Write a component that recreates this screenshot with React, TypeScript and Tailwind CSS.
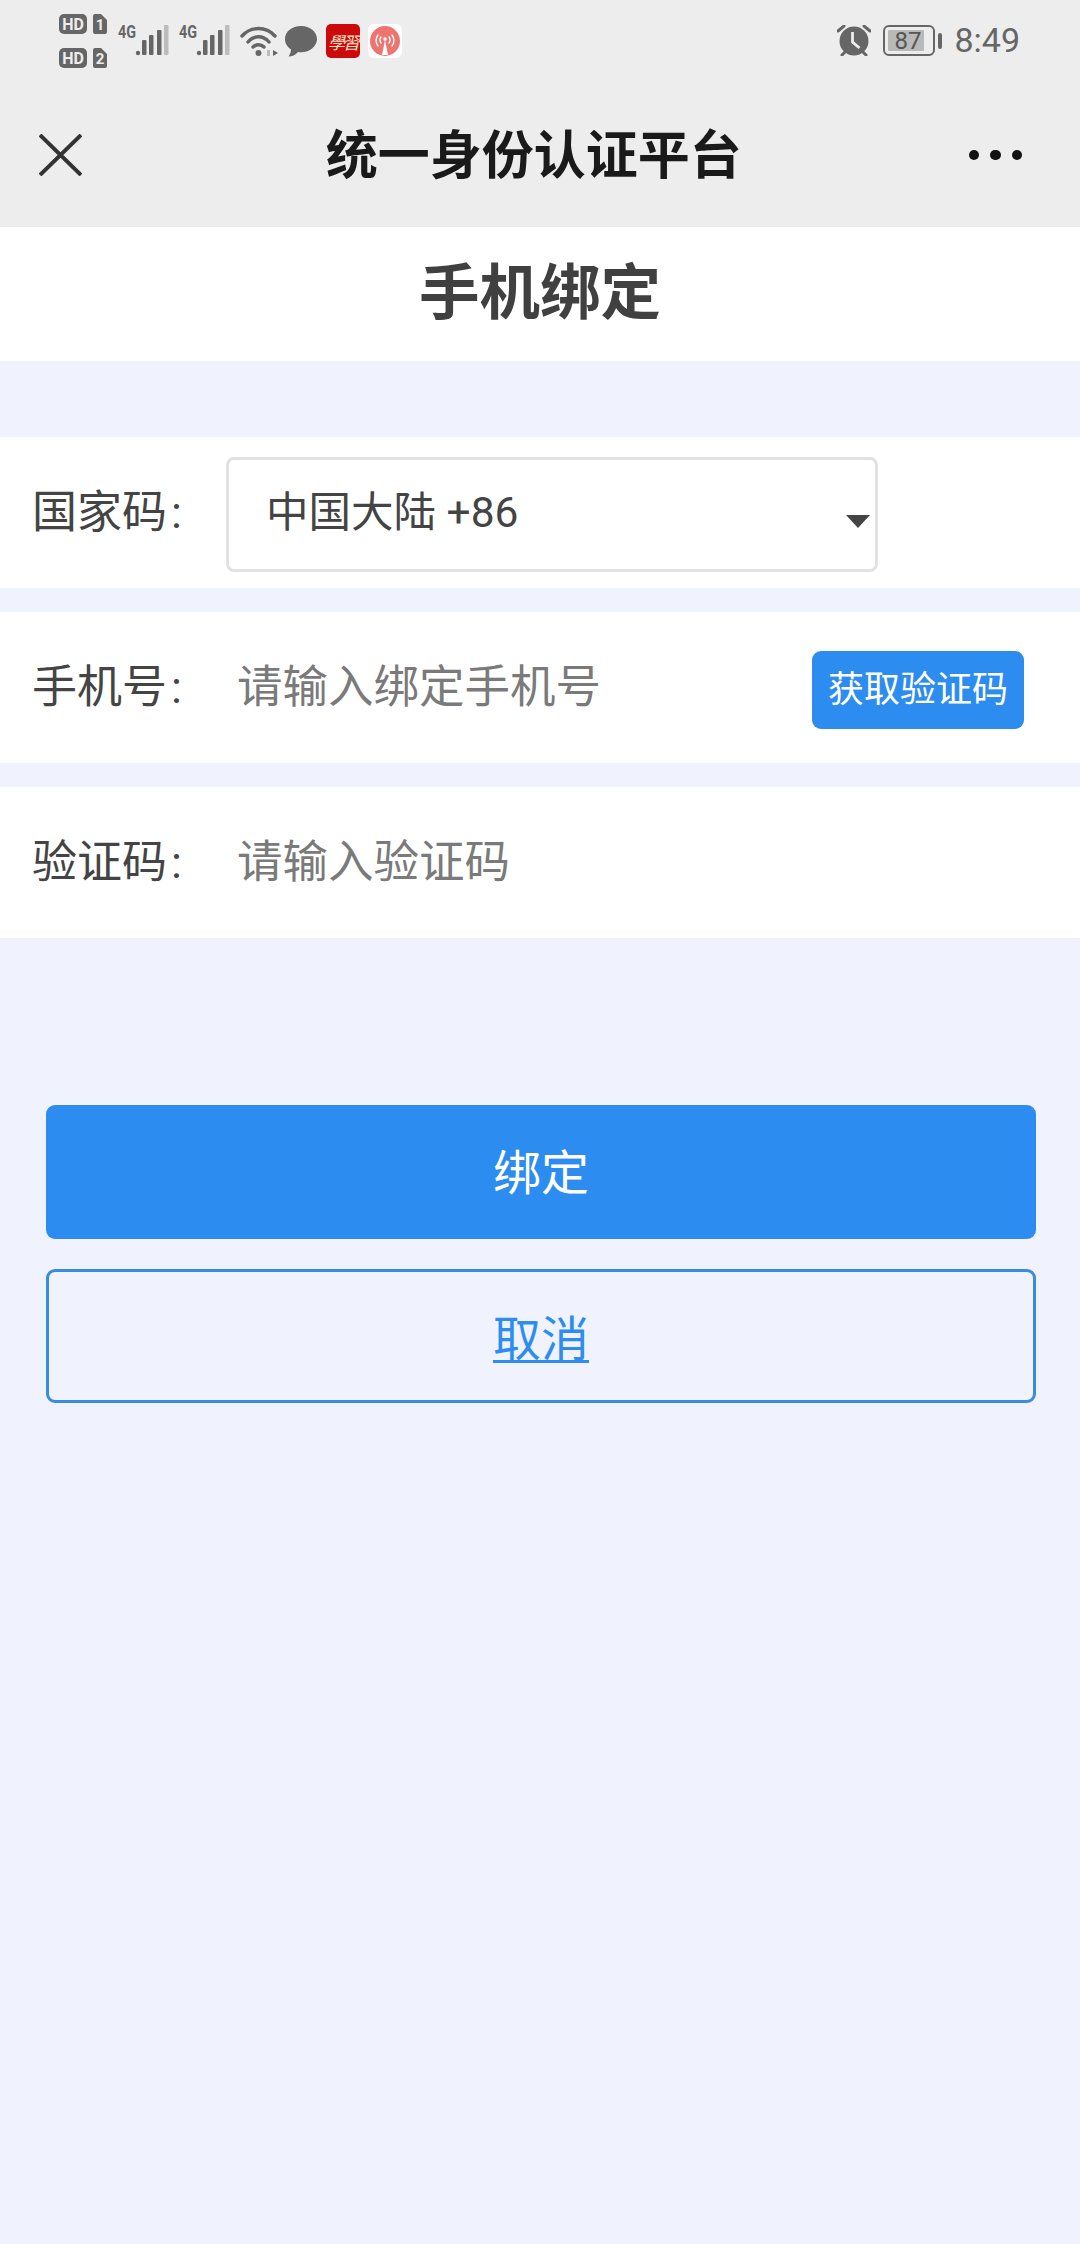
const FONT = "font-['Roboto','Noto_Sans_CJK_SC',sans-serif]"

// 双卡 HD 标识
function HdBadges() {
  return (
    <svg width="50" height="55" viewBox="0 0 50 55" className="shrink-0">
      {[0, 34].map((y, i) => (
        <g key={y}>
          <rect x="0" y={y} width="28" height="20" rx="5" fill="#666" />
          <text x="14" y={y + 16} textAnchor="middle" fontSize="16" fontWeight="700" fill="#ededed" fontFamily="Roboto, sans-serif">
            HD
          </text>
          <path d={`M34 ${y + 2}a2 2 0 0 1 2-2h6l6 6v12a2 2 0 0 1-2 2H36a2 2 0 0 1-2-2z`} fill="#666" />
          <text x="41" y={y + 16} textAnchor="middle" fontSize="15" fontWeight="700" fill="#ededed" fontFamily="Roboto, sans-serif">
            {i + 1}
          </text>
        </g>
      ))}
    </svg>
  )
}

// 4G 信号格
function Signal() {
  return (
    <svg width="51" height="38" viewBox="0 -6 51 38" className="shrink-0">
      <text x="0" y="14" fontSize="18" fontWeight="700" fill="#666" textLength="18" lengthAdjust="spacingAndGlyphs" fontFamily="Roboto, sans-serif">
        4G
      </text>
      <circle cx="20" cy="29" r="2.2" fill="#666" />
      <rect x="24" y="16" width="4.5" height="15" rx="1" fill="#666" />
      <rect x="31" y="11" width="4.5" height="20" rx="1" fill="#666" />
      <rect x="39" y="6" width="4.5" height="25" rx="1" fill="#666" />
      <rect x="46" y="1" width="4.5" height="30" rx="1" fill="#bdbdbd" />
    </svg>
  )
}

function Wifi() {
  return (
    <svg width="38" height="32" viewBox="0 0 38 32" className="shrink-0" fill="none" stroke="#666" strokeWidth="3.4" strokeLinecap="round">
      <path d="M2 11C11 1 26 1 35 11" />
      <path d="M8 17C14 10 23 10 29 17" />
      <path d="M13 22C16 19 21 19 24 22" />
      <circle cx="18.500" cy="28" r="3" fill="#666" stroke="none" />
      <path d="M33 25v6l5-3z" fill="#666" stroke="none" />
      <rect x="27" y="25" width="3" height="6" fill="#bdbdbd" stroke="none" />
    </svg>
  )
}

function ChatBubble() {
  return (
    <svg width="32" height="31" viewBox="0 0 32 31" className="shrink-0">
      <path d="M16 0C7 0 0 5.500 0 13c0 4.500 2.500 8 6 10.500 0 2.500-1 5-2.500 7 3.500 0 7-1.500 9.500-4.500 1 .2 2 .2 3 .2 9 0 16-6 16-13.200S25 0 16 0z" fill="#666" />
    </svg>
  )
}

// 学习强国图标
function StudyIcon() {
  return (
    <div className="w-[34px] h-[34px] rounded-[5px] bg-[#cc0a0c] flex items-center justify-center shrink-0">
      <span className="text-[17px] leading-none italic text-[#fbe3c8] tracking-[-2px] font-['Noto_Sans_CJK_TC',sans-serif]">學習</span>
    </div>
  )
}

function RadioIcon() {
  return (
    <div className="w-[34px] h-[34px] rounded-[6px] bg-white flex items-center justify-center shrink-0">
      <svg width="30" height="30" viewBox="0 0 30 30" fill="none" stroke="#fff" strokeWidth="1.400" strokeLinecap="round">
        <circle cx="15" cy="15" r="15" fill="#ee7470" stroke="none" />
        <path d="M8 20a9.500 9.500 0 0 1 0-11" />
        <path d="M22 20a9.500 9.500 0 0 0 0-11" />
        <path d="M11 17a5 5 0 0 1 0-6" />
        <path d="M19 17a5 5 0 0 0 0-6" />
        <circle cx="15" cy="13" r="1.800" fill="#fff" stroke="none" />
        <path d="M15 14L12 29h6z" fill="#fff" stroke="none" />
      </svg>
    </div>
  )
}

function AlarmClock() {
  return (
    <svg width="34" height="31" viewBox="0 0 34 31" className="shrink-0">
      <circle cx="17" cy="16" r="14.500" fill="#666" />
      <path d="M1 6l6-5M33 6l-6-5M5 30l3-3M29 30l-3-3" stroke="#666" strokeWidth="3" strokeLinecap="round" />
      <path d="M15.500 7v10l7 6" fill="none" stroke="#ededed" strokeWidth="2.800" />
    </svg>
  )
}

function Battery() {
  return (
    <div className="flex items-center gap-[3px] shrink-0">
      <div className="relative w-[52px] h-[31px] rounded-[6px] border-[2px] border-[#666] p-[3px]">
        <div className="h-full w-[84%] rounded-[1px] bg-[#b9b9b9]" />
        <span className="absolute inset-0 flex items-center justify-center pr-[3px] text-[24px] leading-none text-[#555]">87</span>
      </div>
      <div className="w-[4px] h-[16px] rounded-full bg-[#666]" />
    </div>
  )
}

function StatusBar() {
  return (
    <div className="h-[80px] flex pl-[59px] pr-[60px] pt-[14px]">
      <HdBadges />
      <div className="ml-[9px] mt-[4px]">
        <Signal />
      </div>
      <div className="ml-[10px] mt-[4px]">
        <Signal />
      </div>
      <div className="ml-[10px] mt-[11px]">
        <Wifi />
      </div>
      <div className="ml-[7px] mt-[12px]">
        <ChatBubble />
      </div>
      <div className="ml-[9px] mt-[10px]">
        <StudyIcon />
      </div>
      <div className="ml-[8px] mt-[10px]">
        <RadioIcon />
      </div>
      <div className="ml-auto mt-[11px] flex items-center self-start gap-[12px]">
        <AlarmClock />
        <Battery />
        <span className="text-[34px] leading-[31px] text-[#666]">8:49</span>
      </div>
    </div>
  )
}

function NavBar() {
  return (
    <div className="h-[147px] flex items-center pl-[39px] pr-[58px] pt-[3px]">
      <svg width="43" height="42" viewBox="0 0 43 42" className="shrink-0" stroke="#333" strokeWidth="4" fill="none">
        <path d="M1 1l41 40M42 1L1 41" />
      </svg>
      <h1 className="flex-1 text-center pl-[17px] pt-[3px] text-[52px] leading-none font-semibold text-[#1a1a1a]">统一身份认证平台</h1>
      <div className="flex gap-[11px] shrink-0">
        <span className="w-[10.500px] h-[10.500px] rounded-full bg-[#111]" />
        <span className="w-[10.500px] h-[10.500px] rounded-full bg-[#111]" />
        <span className="w-[10.500px] h-[10.500px] rounded-full bg-[#111]" />
      </div>
    </div>
  )
}

function FormRow({ label, children }: { label: string; children: React.ReactNode }) {
  return (
    <div className="h-[151px] bg-white flex items-center pl-[32px]">
      <span className="w-[194px] shrink-0 text-[45px] leading-none text-[#444]">
        {label}
        <span className="ml-[4px]">:</span>
      </span>
      {children}
    </div>
  )
}

export default function App() {
  return (
    <div className={`w-[1080px] h-[2244px] bg-[#f0f3fe] ${FONT}`}>
      <header className="bg-[#ededed]">
        <StatusBar />
        <NavBar />
      </header>

      <div className="h-[134px] bg-white flex items-center justify-center">
        <h2 className="text-[60.500px] leading-none font-bold text-[#404040]">手机绑定</h2>
      </div>

      <div className="pt-[76px] flex flex-col gap-[24px]">
        <FormRow label="国家码">
          <div className="relative mt-[4px] w-[652px] h-[115px] rounded-[8px] border-[3px] border-[#e2e2e2] bg-white flex items-center pl-[37px] pb-[2px]">
            <span className="text-[42.500px] leading-none text-[#444]">中国大陆 +86</span>
            <span className="absolute right-[5px] top-[55px] w-0 h-0 border-x-[12px] border-x-transparent border-t-[13px] border-t-[#444]" />
          </div>
        </FormRow>
        <FormRow label="手机号">
          <input
            placeholder="请输入绑定手机号"
            className="ml-[11px] flex-1 min-w-0 text-[45.500px] leading-none outline-none placeholder:text-[#7a7a7a]"
          />
          <button className="mt-[4px] mr-[56px] w-[212px] h-[78px] rounded-[9px] bg-[#2d8cf0] text-white text-[36px] leading-none">获取验证码</button>
        </FormRow>
        <FormRow label="验证码">
          <input
            placeholder="请输入验证码"
            className="ml-[11px] flex-1 min-w-0 mr-[56px] text-[45.500px] leading-none outline-none placeholder:text-[#7a7a7a]"
          />
        </FormRow>
      </div>

      <div className="mt-[167px] pl-[46px] pr-[44px] flex flex-col gap-[30px]">
        <button className="h-[134px] pt-[4px] rounded-[9px] bg-[#2d8cf0] text-white text-[48px] leading-none">绑定</button>
        <button className="h-[134px] pt-[8px] rounded-[9px] border-[3px] border-[#3a8dd9] text-[#2d8cf0] text-[48px] leading-none underline decoration-[3px] underline-offset-[4px]">取消</button>
      </div>
    </div>
  )
}
